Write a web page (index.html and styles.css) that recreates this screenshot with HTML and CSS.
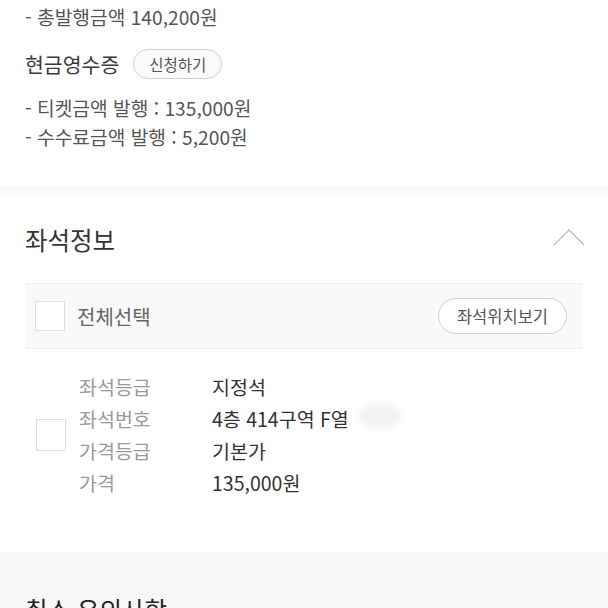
FILE: index.html
```html
<!DOCTYPE html>
<html lang="ko">
<head>
    <meta charset="UTF-8">
    <meta name="viewport" content="width=device-width, initial-scale=1.0">
    <title>예매확인</title>
    <link rel="stylesheet" href="styles.css">
</head>
<body>
    <section class="receipt">
        <p class="line">- 총발행금액 140,200원</p>
        <div class="cash-row">
            <h3 class="cash-title">현금영수증</h3>
            <button class="pill pill-small">신청하기</button>
        </div>
        <p class="line">- 티켓금액 발행 : 135,000원</p>
        <p class="line">- 수수료금액 발행 : 5,200원</p>
    </section>

    <section class="seat">
        <div class="sec-head">
            <h2>좌석정보</h2>
            <svg class="chevron" width="32" height="17" viewBox="0 0 32 17">
                <polyline points="1,16 16,1 31,16" fill="none" stroke="#bdbdbd" stroke-width="1.4"/>
            </svg>
        </div>
        <div class="seat-bar">
            <label class="check-all"><span class="box"></span>전체선택</label>
            <button class="pill">좌석위치보기</button>
        </div>
        <div class="seat-item">
            <span class="box box-item"></span>
            <dl class="seat-info">
                <dt>좌석등급</dt><dd>지정석</dd>
                <dt>좌석번호</dt><dd>4층 414구역 F열 <span class="mask"></span></dd>
                <dt>가격등급</dt><dd>기본가</dd>
                <dt>가격</dt><dd>135,000원</dd>
            </dl>
        </div>
    </section>

    <section class="notice">
        <h2>취소 유의사항</h2>
    </section>
</body>
</html>
```

FILE: styles.css
```css
*{padding:0; margin:0; box-sizing:border-box;}
html,body{background:#fff;}
body{
    font-family:"Noto Sans CJK KR","Noto Sans",sans-serif;
    color:#333;
    overflow:hidden;
}

.pill{
    font-family:inherit;
    background:#fff;
    border:1px solid #cfcfcf;
    border-radius:20px;
    color:#555;
    font-size:16.5px;
    height:36px;
    padding:0 18px;
    line-height:34px;
}
.pill-small{
    font-size:15.5px; height:30px; line-height:28px; padding:0 15px;
    background:#fafafa;
}

/* receipt */
.receipt{
    padding:3px 25px 33px;
    border-bottom:10px solid #f9f9f9;
}
.line{
    font-size:19.2px; line-height:29px; color:#555;
}
.cash-row{
    display:flex; align-items:center; gap:14px;
    height:30px; margin:17px 0 15px;
}
.cash-title{font-size:20.5px; font-weight:normal; color:#3a3a3a;}

/* seat */
.seat{padding:24px 25px 53px;}
.sec-head{
    display:flex; justify-content:space-between; align-items:center;
    height:40px;
}
.sec-head h2{font-size:24.5px; font-weight:normal; color:#333;}
.chevron{margin-right:-2px; margin-top:-4px;}

.seat-bar{
    margin-top:24px;
    height:66px;
    display:flex; justify-content:space-between; align-items:center;
    background:#f9f9f9;
    border-top:1px solid #eee; border-bottom:1px solid #eee;
    padding:0 16px 0 10px;
}
.check-all{
    display:flex; align-items:center; gap:12px;
    font-size:20px; color:#666;
}
.box{
    display:inline-block; width:30px; height:30px;
    background:#fff; border:1px solid #ddd;
}

.seat-item{
    display:flex; align-items:center;
    margin-top:22px;
    padding-left:11px;
}
.box-item{width:30px; height:32px; margin-right:13px;}
.seat-info{
    display:grid; grid-template-columns:133px 1fr;
    font-size:19.5px; line-height:32px;
}
.seat-info dt{color:#9a9a9a;}
.seat-info dd{color:#333;}
.mask{
    display:inline-block; width:44px; height:28px;
    vertical-align:middle; margin-top:-12px; margin-left:4px;
    background:#f3f3f3; border-radius:50%;
    filter:blur(3px);
}

/* notice */
.notice{
    background:#f7f7f7;
    padding:38px 25px 40px;
}
.notice h2{font-size:24.5px; font-weight:normal; line-height:40px; color:#222;}
```
